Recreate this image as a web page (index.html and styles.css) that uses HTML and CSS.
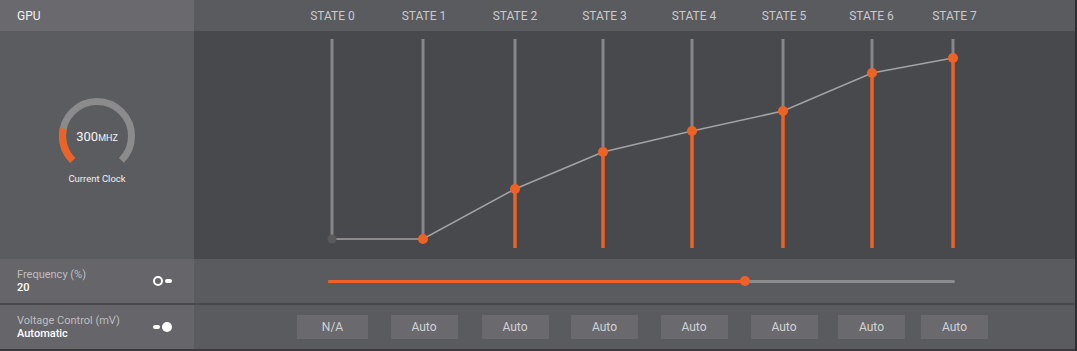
FILE: index.html
```html
<!DOCTYPE html>
<html lang="en">
  <head>
    <meta charset="UTF-8">
    <meta name="viewport" content="width=device-width, initial-scale=1.0">
    <title>GPU Clock States</title>
    <link rel="stylesheet" href="styles.css">
  </head>
  <body>
    <div class="panel">

      <!-- header row -->
      <div class="side head-side">GPU</div>
      <div class="states head-states">
        <span class="st">STATE 0</span>
        <span class="st">STATE 1</span>
        <span class="st">STATE 2</span>
        <span class="st">STATE 3</span>
        <span class="st">STATE 4</span>
        <span class="st">STATE 5</span>
        <span class="st">STATE 6</span>
        <span class="st">STATE 7</span>
      </div>

      <!-- clock + chart -->
      <div class="side clock-side">
        <div class="gauge">
          <svg width="80" height="80" viewBox="0 0 80 80">
            <path d="M15.6 64.4 A34.5 34.5 0 1 1 64.4 64.4" fill="none" stroke="#8b8b8d" stroke-width="7"/>
            <path d="M15.6 64.4 A34.5 34.5 0 0 1 6.3 32.8" fill="none" stroke="#ee6225" stroke-width="7"/>
          </svg>
          <div class="gauge-val">300<small>MHz</small></div>
        </div>
        <div class="gauge-label">Current Clock</div>
      </div>
      <div class="chart">
        <svg width="881" height="228" viewBox="0 0 881 228">
          <g stroke="#87878a" stroke-width="3">
            <line x1="138" y1="8" x2="138" y2="208"/>
            <line x1="229" y1="8" x2="229" y2="208"/>
            <line x1="321" y1="8" x2="321" y2="158"/>
            <line x1="409" y1="8" x2="409" y2="121"/>
            <line x1="498" y1="8" x2="498" y2="100"/>
            <line x1="589" y1="8" x2="589" y2="80"/>
            <line x1="678" y1="8" x2="678" y2="42"/>
            <line x1="759" y1="8" x2="759" y2="27"/>
          </g>
          <g stroke="#ee6225" stroke-width="3.5">
            <line x1="321" y1="158" x2="321" y2="217"/>
            <line x1="409" y1="121" x2="409" y2="217"/>
            <line x1="498" y1="100" x2="498" y2="217"/>
            <line x1="589" y1="80" x2="589" y2="217"/>
            <line x1="678" y1="42" x2="678" y2="217"/>
            <line x1="759" y1="27" x2="759" y2="217"/>
          </g>
          <polyline points="138,208 229,208 321,158 409,121 498,100 589,80 678,42 759,27" fill="none" stroke="#a3a3a5" stroke-width="1.5"/>
          <circle cx="138" cy="208" r="4.5" fill="#5a5a5c"/>
          <g fill="#ee6225">
            <circle cx="229" cy="208" r="5"/>
            <circle cx="321" cy="158" r="5"/>
            <circle cx="409" cy="121" r="5"/>
            <circle cx="498" cy="100" r="5"/>
            <circle cx="589" cy="80" r="5"/>
            <circle cx="678" cy="42" r="5"/>
            <circle cx="759" cy="27" r="5"/>
          </g>
        </svg>
      </div>

      <!-- frequency -->
      <div class="side row-side">
        <div>
          <div class="row-label">Frequency (%)</div>
          <div class="row-value">20</div>
        </div>
        <div class="toggle">
          <span class="ring"></span><span class="dash"></span>
        </div>
      </div>
      <div class="row-main slider-row">
        <div class="slider">
          <div class="fill" style="width: 417px"></div>
          <div class="thumb" style="left: 417px"></div>
        </div>
      </div>

      <div class="sep"></div>

      <!-- voltage -->
      <div class="side row-side">
        <div>
          <div class="row-label">Voltage Control (mV)</div>
          <div class="row-value">Automatic</div>
        </div>
        <div class="toggle">
          <span class="dash"></span><span class="dot"></span>
        </div>
      </div>
      <div class="row-main states btn-row">
        <span class="btn wide">N/A</span>
        <span class="btn">Auto</span>
        <span class="btn">Auto</span>
        <span class="btn">Auto</span>
        <span class="btn">Auto</span>
        <span class="btn">Auto</span>
        <span class="btn">Auto</span>
        <span class="btn">Auto</span>
      </div>

      <div class="sep bottom"></div>
    </div>
  </body>
</html>
```

FILE: styles.css
```css
body {
  margin: 0;
  background: #2f2f33;
  font-family: Roboto, "Liberation Sans", sans-serif;
}

.panel {
  width: 1075px;
  display: grid;
  grid-template-columns: 194px 881px;
  grid-template-rows: 31px 228px 44px 2px 44px 2px;
}

.side {
  box-sizing: border-box;
  padding-left: 17px;
}

/* header */
.head-side {
  background: #6a696e;
  color: #f2f2f2;
  font-size: 12px;
  display: flex;
  align-items: center;
}

.states {
  display: grid;
  grid-template-columns: 93px 91px 92px 90px 89px 90px 90px 85px 81px;
  align-items: center;
}
.states > :first-child { grid-column: 2; }

.head-states {
  background: #5a5b5f;
}
.st {
  justify-self: center;
  color: #cacacc;
  font-size: 12px;
  white-space: nowrap;
}

/* clock */
.clock-side {
  background: #5b5c60;
  padding: 0 0 9px 0;
  display: flex;
  flex-direction: column;
  align-items: center;
  justify-content: center;
}
.gauge {
  position: relative;
  width: 80px;
  height: 80px;
}
.gauge svg { display: block; }
.gauge-val {
  position: absolute;
  left: 0;
  right: 0;
  top: 34px;
  text-align: center;
  color: #f4f4f4;
  font-size: 13px;
  line-height: 14px;
}
.gauge-val small {
  font-size: 9px;
  text-transform: uppercase;
}
.gauge-label {
  margin-top: -3px;
  color: #f0f0f0;
  font-size: 9.5px;
  line-height: 12px;
}

.chart {
  background: #48494d;
}
.chart svg { display: block; }

/* bottom rows */
.row-side {
  background: #666569;
  display: flex;
  align-items: center;
  justify-content: space-between;
  padding-right: 22px;
}
.row-label {
  color: #bebec0;
  font-size: 11px;
  line-height: 13px;
}
.row-value {
  color: #ffffff;
  font-size: 11px;
  font-weight: 500;
  line-height: 13px;
}

.toggle {
  display: flex;
  align-items: center;
  gap: 2px;
}
.ring {
  width: 6px;
  height: 6px;
  border: 2px solid #ffffff;
  border-radius: 50%;
}
.dash {
  width: 7px;
  height: 4px;
  border-radius: 2px;
  background: #ffffff;
}
.dot {
  width: 10px;
  height: 10px;
  border-radius: 50%;
  background: #ffffff;
}

.row-main {
  background: #5a5b5f;
}

.slider-row {
  display: flex;
  align-items: center;
  padding-left: 134px;
}
.slider {
  position: relative;
  width: 627px;
  height: 3px;
  background: #8c8c8e;
  border-radius: 2px;
}
.fill {
  height: 3px;
  background: #ee6225;
  border-radius: 2px;
}
.thumb {
  position: absolute;
  top: -3.5px;
  width: 10px;
  height: 10px;
  margin-left: -5px;
  border-radius: 50%;
  background: #ee6225;
}

.sep {
  grid-column: 1 / 3;
  background: #47484c;
}
.sep.bottom {
  background: #3a3a3e;
}

.btn {
  justify-self: center;
  width: 67px;
  height: 24px;
  line-height: 24px;
  text-align: center;
  background: #6a6a6e;
  color: #d2d2d4;
  font-size: 12px;
}
.btn.wide { width: 71px; }
```
